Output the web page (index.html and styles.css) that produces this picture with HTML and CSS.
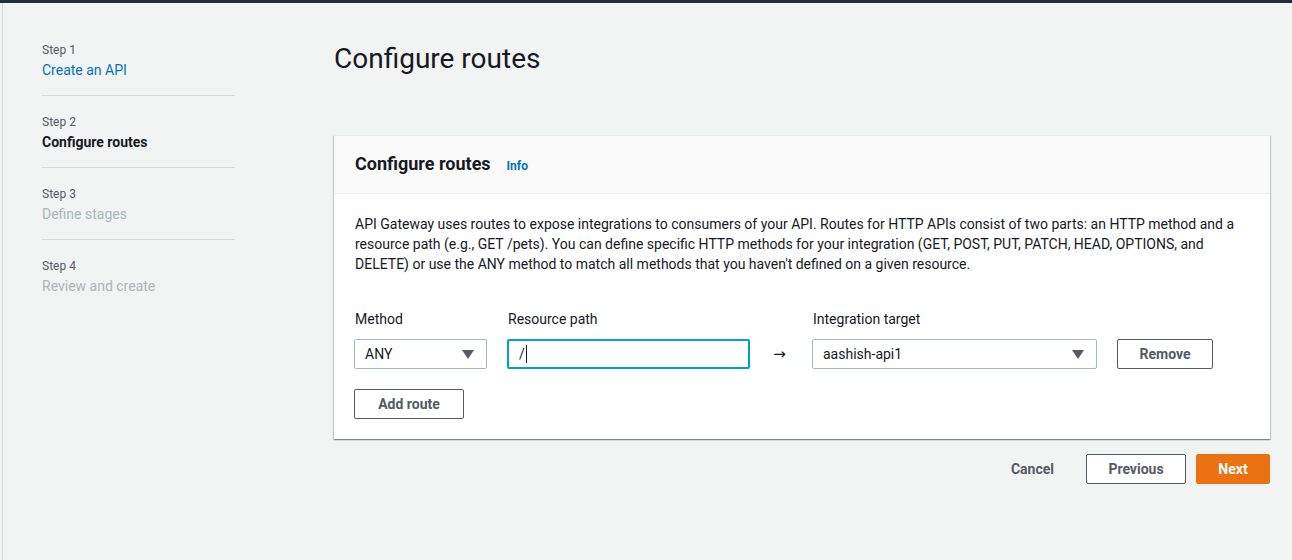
FILE: index.html
```html
<!DOCTYPE html>
<html>
<head>
<meta charset="utf-8">
<link rel="stylesheet" href="styles.css">
</head>
<body>
<div class="topbar"></div>
<div class="layout">
  <nav class="steps">
    <div class="step">
      <div class="step-label">Step 1</div>
      <a class="step-title link">Create an API</a>
    </div>
    <div class="step">
      <div class="step-label">Step 2</div>
      <div class="step-title current">Configure routes</div>
    </div>
    <div class="step">
      <div class="step-label">Step 3</div>
      <div class="step-title disabled">Define stages</div>
    </div>
    <div class="step last">
      <div class="step-label">Step 4</div>
      <div class="step-title disabled">Review and create</div>
    </div>
  </nav>
  <main class="main">
    <h1 class="page-title">Configure routes</h1>
    <section class="card">
      <div class="card-header">
        <h2 class="card-title">Configure routes</h2>
        <a class="info">Info</a>
      </div>
      <div class="card-body">
        <p class="desc">API Gateway uses routes to expose integrations to consumers of your API. Routes for HTTP APIs consist of two parts: an HTTP method and a resource path (e.g., GET /pets). You can define specific HTTP methods for your integration (GET, POST, PUT, PATCH, HEAD, OPTIONS, and DELETE) or use the ANY method to match all methods that you haven't defined on a given resource.</p>
        <div class="route-row">
          <div class="field f-method">
            <label class="field-label">Method</label>
            <div class="select"><span>ANY</span><span class="caret"></span></div>
          </div>
          <div class="field f-path">
            <label class="field-label">Resource path</label>
            <div class="input focused"><span>/</span><span class="cursor"></span></div>
          </div>
          <div class="arrow">→</div>
          <div class="field f-target">
            <label class="field-label">Integration target</label>
            <div class="select"><span>aashish-api1</span><span class="caret"></span></div>
          </div>
          <button class="btn btn-remove">Remove</button>
        </div>
        <button class="btn btn-add">Add route</button>
      </div>
    </section>
    <div class="actions">
      <button class="btn-link">Cancel</button>
      <button class="btn btn-prev">Previous</button>
      <button class="btn btn-primary">Next</button>
    </div>
  </main>
</div>
</body>
</html>
```

FILE: styles.css
```css
* { box-sizing: border-box; }
html, body { margin: 0; padding: 0; }
body {
  background: #f2f3f3;
  font-family: Roboto, "Noto Sans", sans-serif;
  color: #16191f;
  width: 1292px;
  height: 560px;
  overflow: hidden;
}
.topbar { height: 3px; background: #232f3e; }
.layout {
  display: flex;
  height: 557px;
  border-left: 1px solid #d5dbdb;
  margin-left: 2px;
}
.steps {
  width: 232px;
  padding: 21px 0 0 39px;
  flex: none;
}
.step {
  width: 193px;
  padding: 16px 0 15px;
  border-bottom: 1px solid #d5dbdb;
}
.step.last { border-bottom: none; }
.step-label { font-size: 12px; line-height: 20px; color: #545b64; }
.step-title { display: block; font-size: 14px; line-height: 20px; }
.link { color: #0073bb; }
.current { font-weight: 700; color: #16191f; }
.disabled { color: #aab7b8; }

.main { width: 936px; margin-left: 99px; flex: none; }
.page-title {
  margin: 0;
  padding-top: 38px;
  font-size: 28px;
  line-height: 36px;
  font-weight: 400;
  color: #16191f;
  height: 132px;
}
.card {
  background: #fff;
  box-shadow: 0 1px 1px 0 rgba(0,28,36,.3), 1px 1px 1px 0 rgba(0,28,36,.15), -1px 1px 1px 0 rgba(0,28,36,.15);
  border-top: 1px solid #eaeded;
}
.card-header {
  display: flex;
  align-items: baseline;
  background: #fafafa;
  border-bottom: 1px solid #eaeded;
  height: 58px;
  padding: 16px 20px 0 21px;
}
.card-title { margin: 0; font-size: 18px; line-height: 24px; font-weight: 700; }
.info { margin-left: 16px; font-size: 12px; font-weight: 700; color: #0073bb; }
.card-body { padding: 20px 20px 20px 20px; }
.desc { margin: 0 0 0 1px; font-size: 14px; line-height: 20px; color: #16191f; }
.route-row { display: flex; align-items: flex-end; margin-top: 35px; }
.field { display: flex; flex-direction: column; }
.field-label { font-size: 14px; line-height: 20px; margin-bottom: 10px; margin-left: 1px; color: #16191f; }
.f-method { width: 133px; }
.f-path { width: 243px; margin-left: 20px; }
.f-target { width: 285px; }
.arrow {
  width: 62px;
  text-align: center;
  font-family: "DejaVu Sans", sans-serif;
  font-size: 15px;
  line-height: 30px;
  padding-right: 3px;
}
.select, .input {
  height: 30px;
  border: 1px solid #aab7b8;
  border-radius: 2px;
  display: flex;
  align-items: center;
  padding: 0 10px;
  font-size: 14px;
}
.select { justify-content: space-between; }
.caret {
  width: 0; height: 0;
  border-left: 6px solid transparent;
  border-right: 6px solid transparent;
  border-top: 9px solid #545b64;
  margin-right: 2px;
}
.input.focused { border: 2px solid #00a1c9; padding-left: 10px; }
.cursor { width: 1px; height: 18px; background: #16191f; margin-left: 1px; }
.btn {
  font-family: inherit;
  font-size: 14px;
  font-weight: 700;
  height: 30px;
  border: 1px solid #545b64;
  border-radius: 2px;
  background: #fff;
  color: #545b64;
  padding: 0 10px;
  white-space: nowrap;
  cursor: pointer;
}
.btn-remove { margin-left: 20px; width: 96px; }
.btn-add { margin-top: 20px; width: 110px; }
.actions {
  display: flex;
  justify-content: flex-end;
  align-items: center;
  margin-top: 15px;
}
.btn-link {
  font-family: inherit;
  background: none;
  border: none;
  font-size: 14px;
  font-weight: 700;
  color: #545b64;
  padding: 0 20px;
  margin-right: 12px;
}
.btn-prev { width: 100px; }
.btn-primary {
  margin-left: 10px;
  width: 74px;
  background: #ec7211;
  border-color: #ec7211;
  color: #fff;
}
```
